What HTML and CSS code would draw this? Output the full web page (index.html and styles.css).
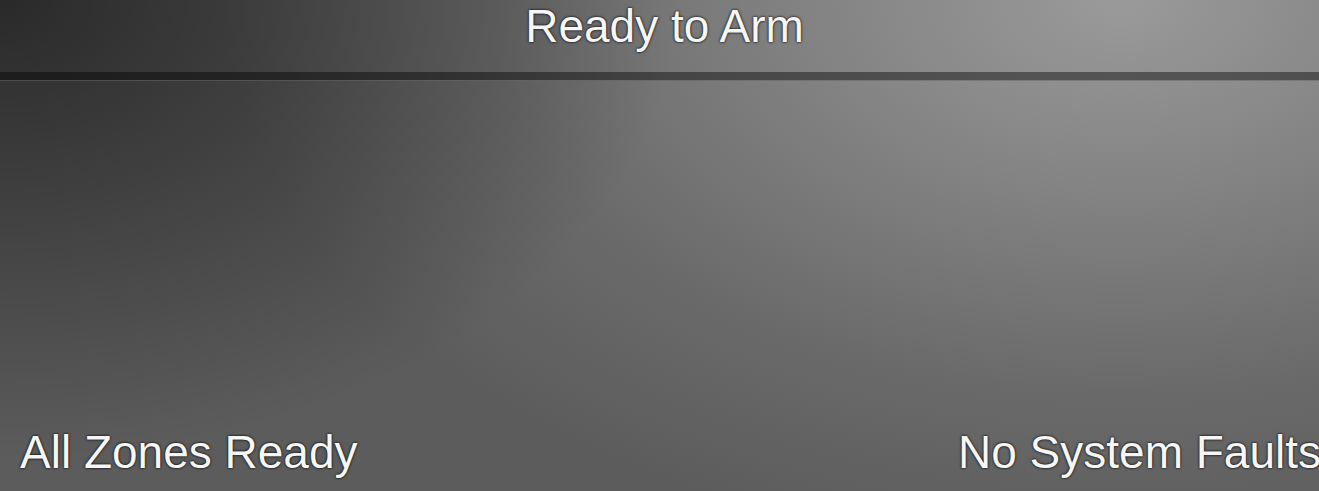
FILE: index.html
```html
<!DOCTYPE html>
<html lang="en">
<head>
<meta charset="utf-8">
<title>Ready to Arm</title>
<link rel="stylesheet" href="styles.css">
</head>
<body>
<div class="screen">
  <header class="header">
    <h1 class="title">Ready to Arm</h1>
  </header>
  <div class="divider"></div>
  <main class="body">
    <div class="status-row">
      <span class="status">All Zones Ready</span>
      <span class="status status-right">No System Faults</span>
    </div>
  </main>
</div>
</body>
</html>
```
FILE: styles.css
```css
html, body {
  margin: 0;
  padding: 0;
  height: 100%;
  overflow: hidden;
}

body {
  font-family: "Liberation Sans", Arial, sans-serif;
  color: #f6f6f6;
}

.screen {
  height: 100vh;
  display: flex;
  flex-direction: column;
  background:
    radial-gradient(ellipse 680px 460px at 0 0, rgba(0,0,0,0.55), rgba(0,0,0,0) 100%),
    radial-gradient(ellipse 900px 560px at 85% 0, #9a9a9a 0%, #868686 30%, #6a6a6a 70%, #5c5c5c 100%);
  background-color: #555;
}

.header {
  height: 72px;
  display: flex;
  justify-content: center;
  align-items: flex-start;
  padding-left: 10px;
  box-sizing: border-box;
}

.title {
  margin: 3px 0 0;
  font-size: 46px;
  font-weight: normal;
  line-height: 46px;
  text-shadow: 0 0 2px rgba(0,0,0,0.9), 0 0 3px rgba(0,0,0,0.6);
}

.divider {
  height: 8px;
  background: rgba(0,0,0,0.42);
  border-bottom: 1px solid rgba(255,255,255,0.22);
}

.body {
  flex: 1;
  display: flex;
  flex-direction: column;
  justify-content: flex-end;
  padding: 0 0 16px 20px;
}

.status-row {
  display: flex;
  justify-content: space-between;
  margin-right: -2px;
}

.status {
  font-size: 46px;
  line-height: 46px;
  white-space: nowrap;
  text-shadow: 0 0 2px rgba(0,0,0,0.9), 0 0 3px rgba(0,0,0,0.6);
}
```
